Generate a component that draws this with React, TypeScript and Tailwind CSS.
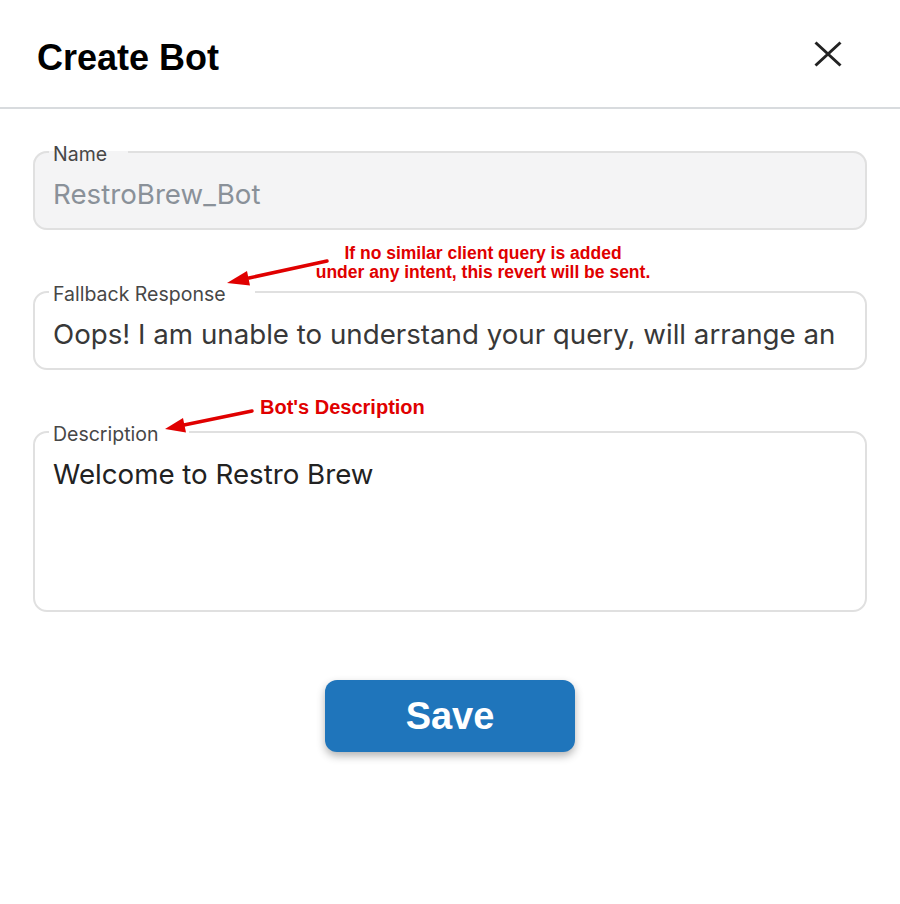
import { useState } from "react";

const arial = "font-['Liberation_Sans',Arial,sans-serif]";
const inter = "font-['Inter','Noto_Sans',sans-serif]";

function Field({ label, notch, children, filled }: { label: string; notch: string; children: React.ReactNode; filled?: boolean }) {
    return (
        <fieldset className={`border-2 border-[#e0e0e0] rounded-[14px] px-[14px] pb-[18px] min-w-0 ${filled ? "bg-[#f4f4f5]" : "bg-white"}`}>
            <legend className={`pl-[4px] ${notch} pt-[5px] text-[19.5px] leading-[22px] text-[#474747] ${inter}`}>{label}</legend>
            {children}
        </fieldset>
    );
}

export default function App() {
    const [fallback, setFallback] = useState<string>("Oops! I am unable to understand your query, will arrange an agent to connect with you shortly.");
    const [description, setDescription] = useState<string>("Welcome to Restro Brew");

    return (
        <div className="relative w-[900px] h-[904px] bg-white overflow-hidden">

            <div className="h-[109px] border-b-2 border-[#d8dbde] flex items-start justify-between pl-[37px] pr-[58px]">
                <h1 className={`mt-[40px] text-[36px] leading-[36px] font-bold text-black ${arial}`}>Create Bot</h1>
                <button className="mt-[41px]" aria-label="Close">
                    <svg width="28" height="26" viewBox="0 0 28 26">
                        <path d="M1.5 1.5 L26.5 24.5 M26.5 1.5 L1.5 24.5" stroke="#222" strokeWidth="3" />
                    </svg>
                </button>
            </div>

            <div className="px-[33px] pt-[29px] flex flex-col gap-[48px]">
                <Field label="Name" notch="pr-[21px]" filled>
                    <input readOnly value="RestroBrew_Bot"
                        className={`mt-[13px] h-[32px] w-full pl-[4px] pr-[10px] bg-transparent outline-none text-[27.7px] leading-[32px] text-[#8a9199] ${inter}`} />
                </Field>

                <Field label="Fallback Response" notch="pr-[29px]">
                    <input value={fallback} onChange={(e) => setFallback(e.target.value)}
                        className={`mt-[13px] h-[32px] w-full pl-[4px] pr-[10px] bg-transparent outline-none text-[27.7px] leading-[32px] text-[#383838] ${inter}`} />
                </Field>

                <Field label="Description" notch="pr-[30px]">
                    <textarea value={description} onChange={(e) => setDescription(e.target.value)}
                        className={`mt-[13px] h-[134px] w-full block pl-[4px] resize-none bg-transparent outline-none text-[27.7px] leading-[32px] text-[#222] ${inter}`} />
                </Field>

                <div className="flex justify-center -mt-[48px] pt-[68px]">
                    <button className={`w-[250px] h-[72px] rounded-[12px] bg-[#1f75bb] text-white text-[38px] font-bold shadow-[0_4px_8px_rgba(0,0,0,0.3)] ${arial}`}>Save</button>
                </div>
            </div>

            {/* annotations */}
            <div className={`absolute left-[300px] top-[244px] w-[366px] text-center text-[17.5px] leading-[19px] font-bold text-[#e00000] ${arial}`}>
                If no similar client query is added<br />under any intent, this revert will be sent.
            </div>
            <div className={`absolute left-[260px] top-[397px] text-[20px] leading-[20px] font-bold text-[#e00000] ${arial}`}>Bot's Description</div>

            <svg className="absolute inset-0 pointer-events-none" width="900" height="904" viewBox="0 0 900 904">
                <line x1="327" y1="261" x2="249" y2="278" stroke="#e00000" strokeWidth="3.5" strokeLinecap="round" />
                <polygon points="227,283 250,285.5 247,271" fill="#e00000" />
                <line x1="252" y1="411" x2="184" y2="425" stroke="#e00000" strokeWidth="3.5" strokeLinecap="round" />
                <polygon points="165,429 186,432.5 183,418" fill="#e00000" />
            </svg>
        </div>
    );
}
